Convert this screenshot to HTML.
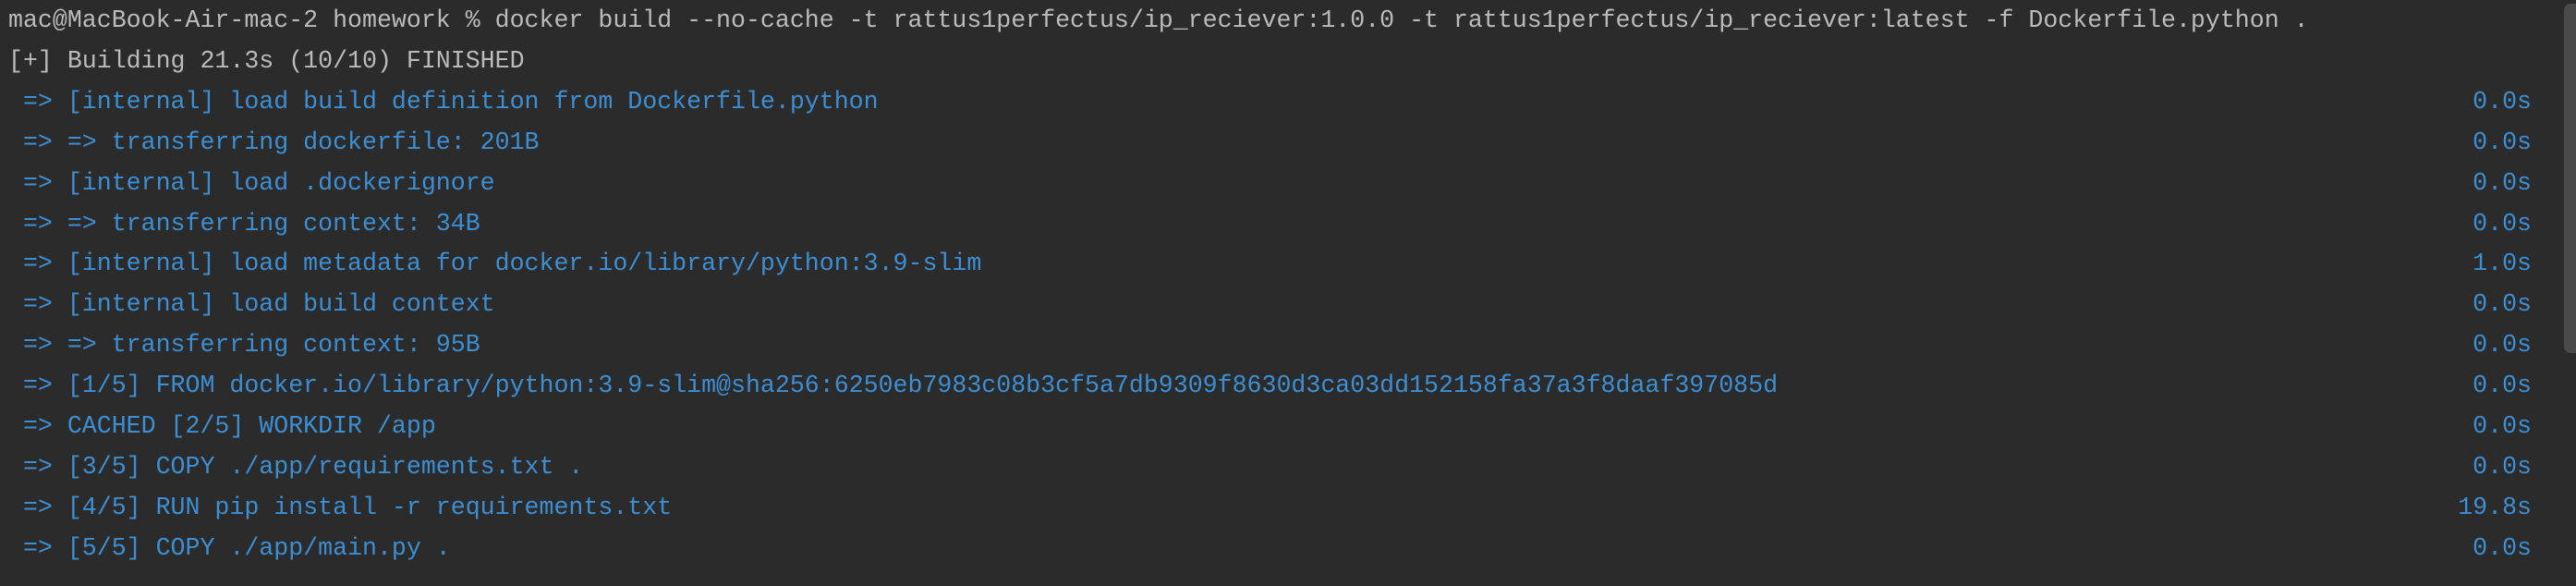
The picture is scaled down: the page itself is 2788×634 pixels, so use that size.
<!DOCTYPE html>
<html><head><meta charset="utf-8"><style>
html,body{margin:0;padding:0;background:#2b2b2b;width:2788px;height:634px;overflow:hidden}
.t{position:absolute;left:9px;top:1px;font-family:"Liberation Mono",monospace;font-size:26.6px;line-height:43.9px;white-space:pre;color:#bbbbbb}
.b{color:#3d8fd4}
.r{position:absolute;right:48px;top:1px;font-family:"Liberation Mono",monospace;font-size:26.6px;line-height:43.9px;white-space:pre;color:#3d8fd4;text-align:right}
.sb{position:absolute;left:2775px;top:4px;width:13px;height:378px;background:#4a4a4a;border-radius:7px 0 0 7px}
</style></head><body>
<div class="t">mac@MacBook-Air-mac-2 homework % docker build --no-cache -t rattus1perfectus/ip_reciever:1.0.0 -t rattus1perfectus/ip_reciever:latest -f Dockerfile.python .
[+] Building 21.3s (10/10) FINISHED
<span class="b"> =&gt; [internal] load build definition from Dockerfile.python
 =&gt; =&gt; transferring dockerfile: 201B
 =&gt; [internal] load .dockerignore
 =&gt; =&gt; transferring context: 34B
 =&gt; [internal] load metadata for docker.io/library/python:3.9-slim
 =&gt; [internal] load build context
 =&gt; =&gt; transferring context: 95B
 =&gt; [1/5] FROM docker.io/library/python:3.9-slim@sha256:6250eb7983c08b3cf5a7db9309f8630d3ca03dd152158fa37a3f8daaf397085d
 =&gt; CACHED [2/5] WORKDIR /app
 =&gt; [3/5] COPY ./app/requirements.txt .
 =&gt; [4/5] RUN pip install -r requirements.txt
 =&gt; [5/5] COPY ./app/main.py .</span></div>
<div class="r">

0.0s
0.0s
0.0s
0.0s
1.0s
0.0s
0.0s
0.0s
0.0s
0.0s
19.8s
0.0s</div>
<div class="sb"></div>
</body></html>
